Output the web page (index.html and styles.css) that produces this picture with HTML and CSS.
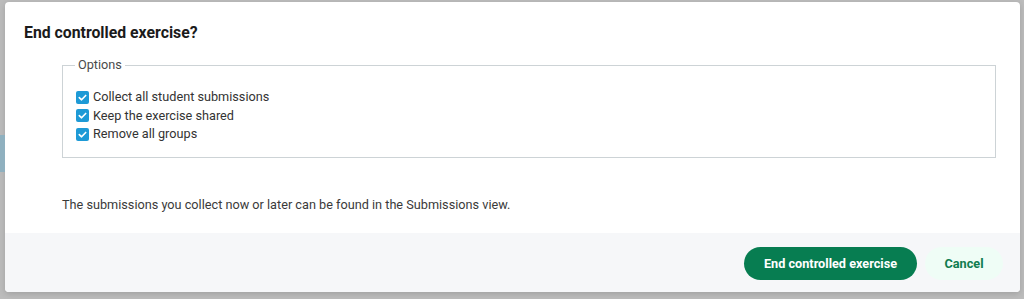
FILE: index.html
```html
<!DOCTYPE html>
<html lang="en">
<head>
    <meta charset="UTF-8">
    <meta name="viewport" content="width=device-width, initial-scale=1.0">
    <title>End controlled exercise</title>
    <link rel="stylesheet" href="styles.css">
</head>
<body>
    <div class="side-strip"></div>

    <div class="dialog">
        <div class="dialog-body">
            <h2 class="dialog-title">End controlled exercise?</h2>

            <div class="dialog-content">
                <fieldset class="options">
                    <legend>Options</legend>
                    <label class="check-row">
                        <span class="check-box">
                            <svg viewBox="0 0 12 12" width="11" height="11"><path d="M2.5 6.2 L5 8.5 L9.5 3.8" fill="none" stroke="#fff" stroke-width="1.8" stroke-linecap="round" stroke-linejoin="round"/></svg>
                        </span>
                        Collect all student submissions
                    </label>
                    <label class="check-row">
                        <span class="check-box">
                            <svg viewBox="0 0 12 12" width="11" height="11"><path d="M2.5 6.2 L5 8.5 L9.5 3.8" fill="none" stroke="#fff" stroke-width="1.8" stroke-linecap="round" stroke-linejoin="round"/></svg>
                        </span>
                        Keep the exercise shared
                    </label>
                    <label class="check-row">
                        <span class="check-box">
                            <svg viewBox="0 0 12 12" width="11" height="11"><path d="M2.5 6.2 L5 8.5 L9.5 3.8" fill="none" stroke="#fff" stroke-width="1.8" stroke-linecap="round" stroke-linejoin="round"/></svg>
                        </span>
                        Remove all groups
                    </label>
                </fieldset>

                <p class="note">The submissions you collect now or later can be found in the Submissions view.</p>
            </div>
        </div>

        <div class="dialog-footer">
            <button class="btn btn-primary">End controlled exercise</button>
            <button class="btn btn-secondary">Cancel</button>
        </div>
    </div>
</body>
</html>
```

FILE: styles.css
```css
* {
    margin: 0;
    padding: 0;
    box-sizing: border-box;
}

body {
    font-family: Roboto, 'Liberation Sans', Arial, sans-serif;
    background: #bcbcbc;
    height: 299px;
    padding: 2px 4px 7px 5px;
    overflow: hidden;
}

/* bluish bit of the page behind the overlay */
.side-strip {
    position: absolute;
    left: 0;
    top: 135px;
    width: 5px;
    height: 37px;
    background: #8fb0bf;
}

.dialog {
    background: #fff;
    border-radius: 4px;
    height: 290px;
    display: flex;
    flex-direction: column;
    overflow: hidden;
    box-shadow: 0 2px 6px rgba(0, 0, 0, 0.15);
}

.dialog-body {
    flex: 1;
    padding: 20px 24px 0 19px;
}

.dialog-title {
    font-size: 15.8px;
    font-weight: 700;
    line-height: 22px;
    color: #1b1b1b;
}

.dialog-content {
    padding-left: 38px;
    margin-top: 13px;
}

.options {
    border: 1px solid #cdd3d6;
    padding: 15px 0 13px 13px;
    height: 101px;
}

.options legend {
    font-size: 12.7px;
    color: #4a4a4a;
    padding: 0 3px;
    margin-left: -1px;
    line-height: 16px;
}

.check-row {
    display: flex;
    align-items: center;
    font-size: 12.7px;
    color: #333;
    line-height: 18.5px;
}

.check-box {
    width: 13px;
    height: 13px;
    border-radius: 2px;
    background: #1e9ad6;
    display: inline-flex;
    align-items: center;
    justify-content: center;
    margin-right: 4px;
}

.note {
    font-size: 12.7px;
    color: #3a3a3a;
    margin-top: 39px;
    line-height: 16px;
}

.dialog-footer {
    background: #f6f7f9;
    height: 59px;
    display: flex;
    justify-content: flex-end;
    align-items: center;
    gap: 8px;
    padding: 1px 17px 0 0;
}

.btn {
    font-family: Roboto, 'Liberation Sans', Arial, sans-serif;
    font-size: 12.7px;
    font-weight: 700;
    height: 33px;
    border: none;
    border-radius: 17px;
    white-space: nowrap;
}

.btn-primary {
    background: #077d51;
    color: #fff;
    width: 173px;
}

.btn-secondary {
    background: #effdf6;
    color: #0f7c4f;
    width: 78px;
}
```
